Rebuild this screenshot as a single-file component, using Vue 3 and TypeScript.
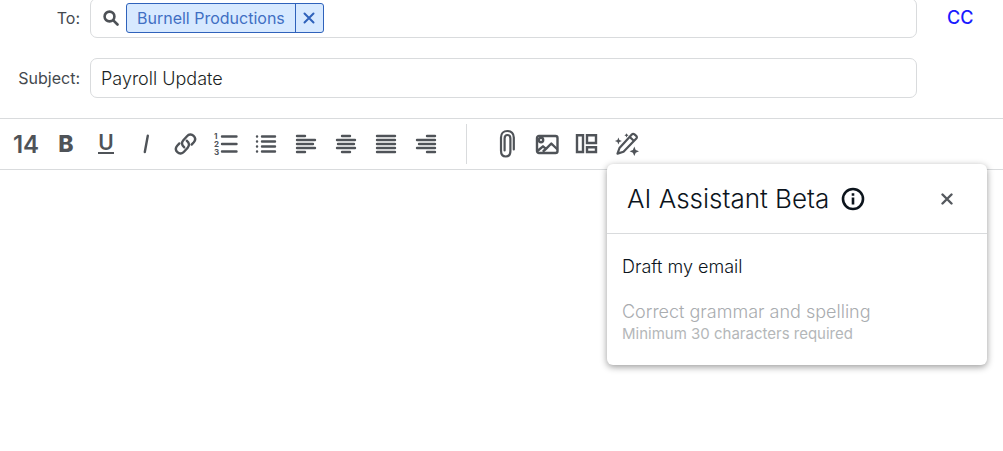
<script setup lang="ts">
import { ref } from 'vue'

const recipient = ref<string | null>('Burnell Productions')
const subject = ref('Payroll Update')
const message = ref('')
const assistantOpen = ref(true)

interface ListTool {
  name: string
  lines: [number, number, number][]
}

const alignTools: ListTool[] = [
  { name: 'Align left', lines: [[3, 11, 4], [3, 21, 8], [3, 19, 12], [3, 21, 16], [3, 11, 20]] },
  { name: 'Align center', lines: [[8, 16, 4], [3, 21, 8], [4, 20, 12], [3, 21, 16], [8, 16, 20]] },
  { name: 'Justify', lines: [[3, 21, 4], [3, 21, 8], [3, 21, 12], [3, 21, 16], [3, 21, 20]] },
  { name: 'Align right', lines: [[13, 21, 4], [3, 21, 8], [5, 21, 12], [3, 21, 16], [13, 21, 20]] },
]
</script>

<template>
  <main class="composer">
    <form class="fields" @submit.prevent>
      <label class="label" for="to">To:</label>
      <div class="field">
        <svg class="search" viewBox="0 0 16 16" aria-hidden="true">
          <circle cx="6.5" cy="6.5" r="4.9" />
          <path d="M10.3 10.3L14.5 14.5" />
        </svg>
        <span v-if="recipient" class="chip">
          <span class="chip-name">{{ recipient }}</span>
          <button type="button" class="chip-remove" aria-label="Remove recipient" @click="recipient = null">
            <svg viewBox="0 0 12 12"><path d="M1.5 1.5L10.5 10.5M10.5 1.5L1.5 10.5" /></svg>
          </button>
        </span>
        <input id="to" class="to-input" type="text" autocomplete="off" />
      </div>
      <button type="button" class="cc">CC</button>

      <label class="label" for="subject">Subject:</label>
      <input id="subject" v-model="subject" class="field subject" type="text" />
    </form>

    <div class="toolbar" role="toolbar" aria-label="Formatting">
      <button type="button" class="tool size" aria-label="Font size 14">14</button>
      <button type="button" class="tool bold" aria-label="Bold">B</button>
      <button type="button" class="tool underline" aria-label="Underline"><span>U</span></button>
      <button type="button" class="tool" aria-label="Italic">
        <svg viewBox="0 0 24 24"><path d="M13.8 3.8L10.8 20" /></svg>
      </button>
      <button type="button" class="tool" aria-label="Insert link">
        <svg class="link" viewBox="0 0 24 24">
          <path d="M10.2 15.2C7.6 13.2 7.4 10.4 9.3 8.3L13 4.2C14.9 2.1 17.7 2 19.6 3.8C21.5 5.6 21.5 8.2 19.8 10.2L17.6 12.6" />
          <path d="M12.8 8.8C15.4 10.8 15.6 13.6 13.7 15.7L10 19.8C8.1 21.9 5.3 22 3.4 20.2C1.5 18.4 1.5 15.8 3.2 13.8L5.4 11.4" />
        </svg>
      </button>
      <button type="button" class="tool" aria-label="Numbered list">
        <svg class="numbered" viewBox="0 0 24 24">
          <text x="0" y="7">1</text>
          <text x="0" y="15">2</text>
          <text x="0" y="23">3</text>
          <path d="M8 4.5H22.5M8 12H22.5M8 19.5H22.5" />
        </svg>
      </button>
      <button type="button" class="tool" aria-label="Bulleted list">
        <svg viewBox="0 0 24 24">
          <path d="M8 4.5H21M8 9.5H21M8 14.5H21M8 19.5H21M3 4.5H3.1M3 9.5H3.1M3 14.5H3.1M3 19.5H3.1" />
        </svg>
      </button>
      <button v-for="tool in alignTools" :key="tool.name" type="button" class="tool" :aria-label="tool.name">
        <svg viewBox="0 0 24 24">
          <path v-for="line in tool.lines" :key="line[2]" :d="`M${line[0]} ${line[2]}H${line[1]}`" />
        </svg>
      </button>

      <span class="divider"></span>

      <button type="button" class="tool" aria-label="Attach file">
        <svg class="clip" viewBox="0 0 24 30">
          <path d="M18.8 20.5V8.5C18.8 4.4 16.3 2 12.4 2C8.5 2 6 4.4 6 8.5V21.5C6 25.6 7.8 27.5 10.8 27.5C13.8 27.5 15.4 25.6 15.4 22V9.5C15.4 7.2 14.3 6 12.5 6C10.7 6 9.6 7.2 9.6 9.5V21.5" />
        </svg>
      </button>
      <button type="button" class="tool" aria-label="Insert image">
        <svg viewBox="0 0 24 24">
          <rect x="2" y="4" width="20.5" height="17" rx="2" />
          <circle cx="6" cy="8" r="2.2" />
          <path d="M3 18.5L8 14.3L11 16.8L16.3 11.5L22 17M8.5 19L11 16.8" />
        </svg>
      </button>
      <button type="button" class="tool" aria-label="Insert layout">
        <svg class="layout" viewBox="0 0 24 24">
          <path d="M2 3.2H8V20H2ZM12 3.2H21V11H12ZM12 15.2H21V20H12Z" />
        </svg>
      </button>
      <div class="assistant">
        <button
          type="button"
          class="tool"
          aria-label="AI Assistant"
          :aria-expanded="assistantOpen"
          @click="assistantOpen = !assistantOpen"
        >
          <svg class="wand" viewBox="0 0 24 24">
            <path d="M2.5 21.6L4.5 16L16.8 2.6C17.6 1.7 18.6 1.7 19.5 2.4L21.2 3.9C22.1 4.7 22.1 5.7 21.3 6.6L8.5 19.8ZM14.8 5L18.8 8.8" />
            <path class="spark" d="M3.4 5.5L4.4 8L6.9 9L4.4 10L3.4 12.5L2.4 10L-0.1 9L2.4 8ZM11.5 1.2L12.2 2.6L13.6 3.3L12.2 4L11.5 5.4L10.8 4L9.4 3.3L10.8 2.6ZM19.3 14.6L20.7 17.9L24 19.3L20.7 20.7L19.3 24L17.9 20.7L14.6 19.3L17.9 17.9Z" />
          </svg>
        </button>

        <section v-if="assistantOpen" class="popover" aria-labelledby="assistant-title">
          <header class="popover-head">
            <h2 id="assistant-title">AI Assistant Beta</h2>
            <svg class="info" viewBox="0 0 24 24" role="img" aria-label="About the assistant">
              <circle cx="12" cy="12" r="10" />
              <path d="M12 10.5V17.5M12 6.3V8.7" />
            </svg>
            <button type="button" class="close" aria-label="Close" @click="assistantOpen = false">
              <svg viewBox="0 0 12 12"><path d="M1.5 1.5L10.5 10.5M10.5 1.5L1.5 10.5" /></svg>
            </button>
          </header>
          <div class="options">
            <button type="button" class="option">Draft my email</button>
            <button type="button" class="option" disabled>
              Correct grammar and spelling
              <small>Minimum 30 characters required</small>
            </button>
          </div>
        </section>
      </div>
    </div>

    <textarea v-model="message" class="message" aria-label="Message"></textarea>
  </main>
</template>

<style>
body {
  background: #fff;
  overflow: hidden;
}
</style>

<style scoped>
.composer {
  display: flex;
  flex-direction: column;
  height: 100vh;
  font-family: Inter, "Liberation Sans", sans-serif;
  font-weight: 300;
  color: #1b1f24;
}
.composer *,
.composer {
  box-sizing: border-box;
}
button,
input,
textarea {
  font: inherit;
  color: inherit;
  margin: 0;
  padding: 0;
  border: 0;
  background: none;
  outline: 0;
}
button {
  cursor: pointer;
}
svg {
  display: block;
  fill: none;
  stroke: currentColor;
  stroke-linecap: round;
  stroke-linejoin: round;
}
.fields {
  display: grid;
  grid-template-columns: 80px 1fr 76px;
  column-gap: 10px;
  row-gap: 20px;
  align-items: center;
  margin-top: -2px;
  padding-bottom: 20px;
}
.label {
  text-align: right;
  font-size: 16px;
  line-height: 20px;
  font-weight: 400;
  color: #44494e;
}
.field {
  display: flex;
  align-items: center;
  height: 40px;
  width: 100%;
  min-width: 0;
  padding: 0 10px;
  border: 1px solid #d9dbdd;
  border-radius: 7px;
}
.subject {
  font-size: 18px;
}
.search {
  width: 16px;
  height: 16px;
  margin: 0 7px 0 2px;
  flex: none;
  color: #4d5156;
  stroke-width: 2.6;
}
.chip {
  display: flex;
  height: 30px;
  flex: none;
  border: 1px solid #2f62bb;
  border-radius: 3px;
  background: #d7e9ff;
  color: #3f6fc3;
}
.chip-name {
  padding: 0 10px;
  font-size: 16px;
  line-height: 28px;
  font-weight: 400;
}
.chip-remove {
  display: grid;
  place-items: center;
  width: 28px;
  border-left: 1px solid #2f62bb;
}
.chip-remove svg {
  width: 12px;
  height: 12px;
  color: #2f62bb;
  stroke-width: 2;
}
.to-input {
  flex: 1;
  min-width: 0;
  height: 30px;
}
.cc {
  justify-self: start;
  margin-left: 20px;
  font-size: 18px;
  line-height: 22px;
  font-weight: 500;
  color: #1a1aff;
}
.toolbar {
  display: flex;
  flex: none;
  padding: 5px 6px;
  border-top: 1px solid #d9dbdd;
  border-bottom: 1px solid #d9dbdd;
  color: #4f5358;
}
.tool {
  display: grid;
  place-items: center;
  flex: none;
  width: 40px;
  height: 40px;
}
.tool svg {
  width: 24px;
  height: 24px;
  stroke-width: 2.4;
  overflow: visible;
}
.tool .clip {
  height: 30px;
  stroke-width: 2.2;
}
.size {
  font-size: 24px;
  font-weight: 600;
}
.bold {
  font-size: 23px;
  font-weight: 800;
}
.underline span {
  width: 16px;
  border-bottom: 2px solid;
  font-size: 21px;
  line-height: 18px;
  font-weight: 600;
}
.numbered text {
  fill: currentColor;
  stroke: none;
  font-size: 8px;
  font-weight: 700;
}
.tool .layout {
  stroke-width: 2.4;
  stroke-linejoin: miter;
}
.tool .wand {
  stroke-width: 2.2;
}
.wand .spark {
  fill: currentColor;
  stroke: none;
}
.divider {
  width: 1px;
  margin: 0 20px;
  background: #d9dbdd;
}
.assistant {
  position: relative;
}
.popover {
  position: absolute;
  z-index: 1;
  top: 100%;
  left: 0;
  width: 380px;
  border-radius: 6px;
  background: #fff;
  color: #0c141c;
  box-shadow: 0 2px 7px rgba(0, 0, 0, 0.4);
}
.popover-head {
  display: flex;
  align-items: center;
  height: 70px;
  padding: 0 20px;
  border-bottom: 1px solid #d9dbdd;
}
h2 {
  margin: 0;
  font-size: 26px;
  line-height: 30px;
  font-weight: 300;
}
.info {
  width: 24px;
  height: 24px;
  margin-left: 12px;
  stroke-width: 2.6;
  stroke-linecap: butt;
}
.close {
  display: grid;
  place-items: center;
  width: 40px;
  height: 40px;
  margin-left: auto;
  color: #55595e;
}
.close svg {
  width: 12px;
  height: 12px;
  stroke-width: 2.4;
}
.options {
  display: grid;
  gap: 23px;
  padding: 22px 15px 20px;
}
.option {
  text-align: left;
  font-size: 18px;
  line-height: 22px;
}
.option:disabled {
  color: #a9acaf;
  cursor: default;
}
.option small {
  display: block;
  font-size: 15px;
  line-height: 22px;
  font-weight: 400;
  color: #b4b7b9;
}
.message {
  flex: 1;
  min-height: 0;
  width: 100%;
  padding: 16px;
  resize: none;
  font-size: 18px;
}
</style>
